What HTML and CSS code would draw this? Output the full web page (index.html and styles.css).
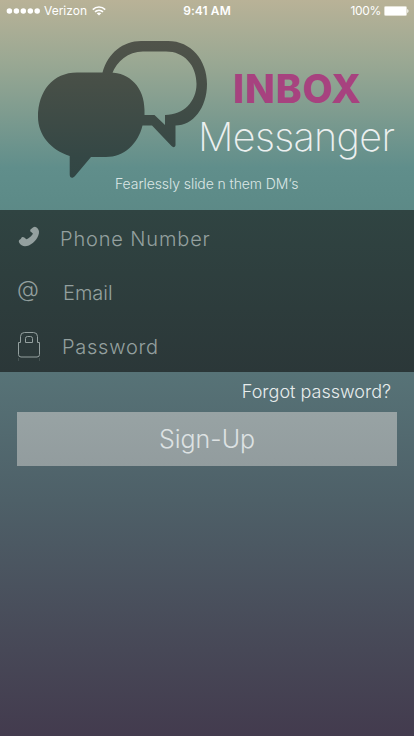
FILE: index.html
```html
<!DOCTYPE html>
<html lang="en">
<head>
<meta charset="utf-8">
<title>Inbox Messanger</title>
<link rel="stylesheet" href="styles.css">
</head>
<body>
<main class="screen">
  <div class="status">
    <div class="carrier">
      <svg class="signal" width="34" height="6" viewBox="0 0 34 6"><g fill="#fff"><circle cx="3.4" cy="3" r="2.75"/><circle cx="10.4" cy="3" r="2.75"/><circle cx="17.3" cy="3" r="2.75"/><circle cx="24.3" cy="3" r="2.75"/><circle cx="31.2" cy="3" r="2.75"/></g></svg>
      <span class="network">Verizon</span>
      <svg class="wifi" width="14" height="10" viewBox="0 0 14 10"><g fill="none" stroke="#fff" stroke-width="1.6"><path d="M.8 3.6C4.3.2 9.7.2 13.200 3.600"/><path d="M3 5.900c2.300-2.100 5.700-2.100 8 0"/></g><path fill="#fff" d="M4.700 7.300c1.400-1.200 3.200-1.200 4.600 0L7 9.600z"/></svg>
    </div>
    <span class="time">9:41 AM</span>
    <div class="power">
      <span class="percent">100%</span>
      <svg width="25" height="10" viewBox="0 0 25 10"><rect x=".5" y=".5" width="22" height="9" rx="1" fill="#fff" stroke="#e3e1d5"/><path d="M23.300 3c1.600.5 1.600 3.500 0 4z" fill="#fff"/></svg>
    </div>
  </div>
  <header class="brand">
    <div class="brand-row">
      <svg class="logo" width="170" height="138" viewBox="38 41 170 138">
        <defs><linearGradient id="shade" gradientUnits="userSpaceOnUse" x1="0" y1="41" x2="0" y2="179"><stop offset="0" stop-color="#50534a"/><stop offset=".3" stop-color="#474f47"/><stop offset=".85" stop-color="#344745"/><stop offset="1" stop-color="#314644"/></linearGradient></defs>
        <path fill="url(#shade)" d="M77 72.500H110C130 72.500 144.500 88 144.500 110V115H154.500L165 125V115C184 115 196.500 101 196.500 84C196.500 65 184 51.500 166 51.500H143C128 51.500 117 61 112 74L102.500 72.500C108 53 123 41 141 41H168C191 41 207 60 207 84C207 108 193 125.500 175.500 125.500V145C175.500 147.500 173 147.800 171.500 146L152 125.500H142.500C138 144 124 157 106 157H91L75 176C72.500 179 69.700 178 69.700 174.500V156C51 150 38 135 38 117C38 91 53 72.500 77 72.500Z"/>
      </svg>
      <h1 class="title"><span class="inbox">INBOX</span><span class="messanger">Messanger</span></h1>
    </div>
    <p class="tagline">Fearlessly slide n them DM‘s</p>
  </header>
  <section class="fields">
    <div class="field phone">
      <svg class="icon" width="24" height="28" viewBox="17 223 24 28"><path fill="#94a09f" d="M33.300 227.300Q35.500 226 37.700 228.500Q40 231 38.300 235.500C36.500 241 30 246.300 25 246.300C22.500 246.300 20.500 244.900 19.200 242.800C18.300 241 19 239.800 20.700 239L21.800 237.300Q23 236.400 24.300 237.600L26.300 239.300C28.500 238.900 32 236 32.900 233.600L30.200 231.200Q29.600 229.600 31.700 228.500Z"/></svg>
      <span class="label">Phone Number</span>
    </div>
    <div class="field email"><span class="icon at">@</span><span class="label">Email</span></div>
    <div class="field password">
      <svg class="icon" width="24" height="32" viewBox="17 329 24 32"><g fill="none" stroke="#94a09f"><path d="M20.500 342.500V336.500Q20.500 332.500 24.500 332.500H33.500Q37.500 332.500 37.500 336.500V342.500H39.500V354.500Q39.500 357 37 357H21Q18.500 357 18.500 354.500V342.500H20.500"/><path d="M25.500 342.500V338.500Q25.500 336.500 27.500 336.500H30.500Q32.500 336.500 32.500 338.500V342.500Z"/><path opacity=".25" d="M18.500 358V361M39.500 358V361"/></g></svg>
      <span class="label">Password</span>
    </div>
  </section>
  <a class="forgot">Forgot password?</a>
  <button class="signup"><span>Sign-Up</span></button>
</main>
</body>
</html>
```
FILE: styles.css
```css
* { box-sizing: border-box; }
body { margin: 0; }
svg { display: block; flex: none; }
.screen {
  width: 414px; height: 736px; overflow: hidden;
  display: flex; flex-direction: column;
  font-family: Inter, "Liberation Sans", sans-serif;
  font-weight: 300; color: #e8eded; white-space: nowrap;
  background: linear-gradient(180deg, #b9b297 0, #9aa893 62px, #608e8b 168px, #5d8b88 200px, #577377 372px, #4e6068 500px, #484b59 630px, #433b4e 736px);
}
.status {
  height: 21px; padding: 0 5px 0 6px;
  display: grid; grid-template-columns: 1fr auto 1fr; align-items: center;
  font-size: 12px; font-weight: 400; line-height: 21px; color: #fff;
}
.carrier, .power { display: flex; align-items: center; }
.network { margin-left: 4px; letter-spacing: 0; }
.wifi { margin-left: 5px; }
.time { font-weight: 600; letter-spacing: .1px; margin-right: 1px; }
.power { justify-content: flex-end; gap: 3px; }
.percent { letter-spacing: -.3px; }
.brand { height: 189px; padding: 20px 0 0 38px; }
.brand-row { display: flex; height: 134px; }
.title { margin: 28px 0 0 -10px; display: flex; flex-direction: column; font-weight: 300; }
.inbox { margin-left: 35px; font-size: 39px; line-height: 40px; font-weight: 800; letter-spacing: .9px; color: #a7427f; }
.messanger { font-size: 39.500px; line-height: 57px; font-weight: 250; letter-spacing: -.65px; color: #ecf0f0; }
.tagline { margin: 0 0 0 77px; font-size: 14px; line-height: 18px; letter-spacing: -.08px; color: #dce7e6; }
.fields { height: 162px; background: linear-gradient(#304442, #2b3738); color: #94a09f; }
.field { display: flex; align-items: center; height: 54px; padding-left: 17px; font-size: 20px; }
.icon { width: 24px; flex: none; }
.label { margin-left: 19px; line-height: 24px; padding-top: 4px; letter-spacing: .850px; }
.email .label { margin-left: 22px; letter-spacing: 0; }
.password .label { margin-left: 21px; letter-spacing: .75px; }
.at { font-size: 22.500px; line-height: 24px; padding-bottom: 4px; }
.forgot { align-self: flex-end; margin-right: 23px; height: 40px; font-size: 18px; line-height: 40px; letter-spacing: 0; }
.signup {
  width: 380px; height: 54px; margin: 0 17px; padding: 0; border: 0;
  background: linear-gradient(#98a3a4, #929c9e);
  font: 300 25px/54px Inter, "Liberation Sans", sans-serif; color: #dde2e3;
}
```
